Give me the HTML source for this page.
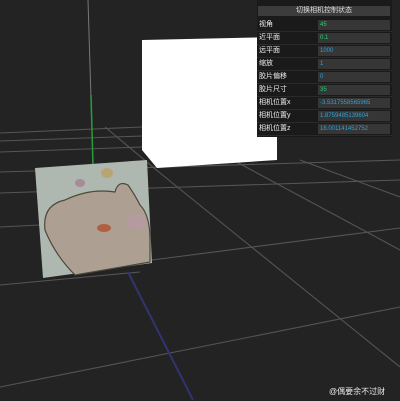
<!DOCTYPE html>
<html><head><meta charset="utf-8"><style>
html,body{margin:0;padding:0;width:400px;height:401px;overflow:hidden;background:#232323;font-family:"Liberation Sans","Noto Sans CJK SC",sans-serif;}
#panel{position:absolute;left:257px;top:0;width:135px;height:137px;background:#1a1a1a;}
.title{position:absolute;left:1px;top:6px;width:132px;height:10px;background:#3c3c3c;color:#ddd;font-size:7px;line-height:10px;text-align:center;}
.row{position:absolute;left:0;width:135px;height:12px;border-bottom:1px solid #2a2a2a;}
.lab{position:absolute;left:2px;top:0;color:#eee;font-size:7px;line-height:12px;}
.val{position:absolute;left:61px;top:1px;width:72px;height:10px;background:#363636;color:#2fa1d6;font-size:6px;line-height:10px;padding-left:2px;box-sizing:border-box;overflow:hidden;white-space:nowrap;}
.g{color:#1ed36f}
#wm{position:absolute;left:329px;top:386px;color:#eee;font-size:8px;white-space:nowrap;}
</style></head><body>
<svg width="400" height="401" style="position:absolute;left:0;top:0">
<g stroke="#555" stroke-width="1.1" fill="none">
<line x1="0" y1="133" x2="142" y2="127"/>
<line x1="0" y1="141" x2="142" y2="136"/>
<line x1="0" y1="152" x2="142" y2="147"/>
<line x1="105" y1="127" x2="160" y2="173"/>
<line x1="0" y1="172" x2="400" y2="160"/>
<line x1="0" y1="193" x2="400" y2="180"/>
<line x1="0" y1="227" x2="40" y2="225"/>
<line x1="152" y1="260" x2="400" y2="228"/>
<line x1="0" y1="285" x2="140" y2="272"/>
<line x1="0" y1="387" x2="400" y2="307"/>
<line x1="160" y1="173" x2="400" y2="367"/>
<line x1="233" y1="160" x2="400" y2="250"/>
<line x1="300" y1="160" x2="400" y2="197"/>
</g>
<line x1="88" y1="0" x2="93" y2="165" stroke="#777" stroke-width="1"/>
<line x1="91" y1="95" x2="93" y2="165" stroke="#2a9a3a" stroke-width="1.5"/>
<line x1="128" y1="272" x2="193" y2="400" stroke="#33336e" stroke-width="2"/>
<polygon points="142,40 277,37 277,160 157,168 142,150" fill="#fff"/>
<polygon points="35,168 147,160 152,263 43,278" fill="#aeb8b0"/>
<path d="M45,230 Q42,205 65,200 Q90,188 115,192 Q118,180 128,185 Q135,195 140,205 Q150,215 150,240 L150,262 L75,275 Q55,255 45,230Z" fill="#ada092" stroke="#4a4a3a" stroke-width="1.2"/>
<ellipse cx="137" cy="222" rx="10" ry="8" fill="#b59aa0"/>
<ellipse cx="107" cy="173" rx="6" ry="5" fill="#b8a572"/>
<ellipse cx="80" cy="183" rx="5" ry="4" fill="#a88a98"/>
<ellipse cx="104" cy="228" rx="7" ry="4" fill="#b06040"/>
</svg>
<div id="panel">
<div class="title">切换相机控制状态</div>
<div class="row" style="top:19px"><span class="lab">视角</span><span class="val g">45</span></div>
<div class="row" style="top:32px"><span class="lab">近平面</span><span class="val g">0.1</span></div>
<div class="row" style="top:45px"><span class="lab">远平面</span><span class="val">1000</span></div>
<div class="row" style="top:58px"><span class="lab">缩放</span><span class="val">1</span></div>
<div class="row" style="top:71px"><span class="lab">胶片偏移</span><span class="val">0</span></div>
<div class="row" style="top:84px"><span class="lab">胶片尺寸</span><span class="val g">35</span></div>
<div class="row" style="top:97px"><span class="lab">相机位置x</span><span class="val">-3.5317558565965</span></div>
<div class="row" style="top:110px"><span class="lab">相机位置y</span><span class="val">1.8759485139604</span></div>
<div class="row" style="top:123px"><span class="lab">相机位置z</span><span class="val">18.001141452752</span></div>
</div>
<div id="wm">@偶要余不过财</div>
</body></html>
